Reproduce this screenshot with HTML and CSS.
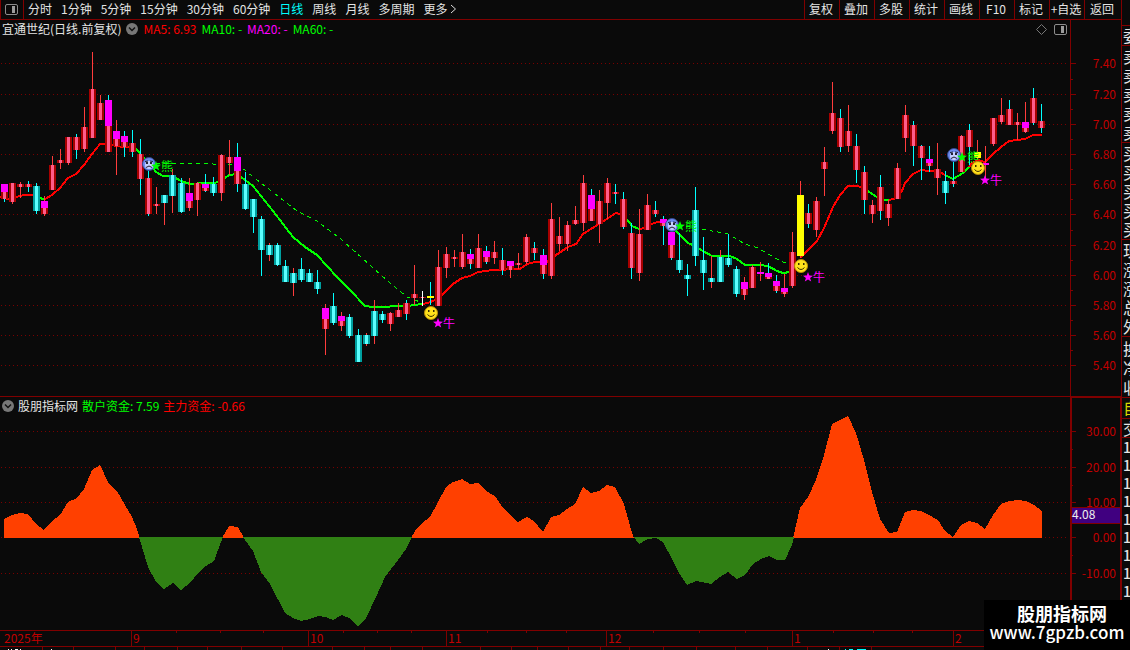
FILE: index.html
```html
<!DOCTYPE html>
<html lang="zh-CN">
<head>
<meta charset="utf-8">
<title>宜通世纪 日线</title>
<link rel="stylesheet" href="styles.css">
</head>
<body>
<svg class="defs" aria-hidden="true">
  <symbol id="smile" viewBox="0 0 14 14"><circle cx="7" cy="7" r="6.5" fill="#ffe11c" stroke="#b98c06"/><rect x="4" y="4" width="1.5" height="2" fill="#3a2c00"/><rect x="9" y="4" width="1.5" height="2" fill="#3a2c00"/><path d="M3.5 8.5Q7 12.5 10.5 8.5" fill="none" stroke="#3a2c00"/></symbol>
  <symbol id="sad" viewBox="0 0 14 14"><circle cx="7" cy="7" r="6.5" fill="#6d8cf0" stroke="#35478f"/><circle cx="7" cy="8" r="4" fill="#c5d0ff"/><path d="M3 4.5L6 4M8 4L11 4.500" stroke="#223" fill="none"/><rect x="4" y="5" width="2" height="2" fill="#223"/><rect x="8" y="5" width="2" height="2" fill="#223"/><path d="M4 10.500Q7 7.500 10 10.500" fill="none" stroke="#223"/></symbol>
  <symbol id="star" viewBox="0 0 10 10"><path d="M5 0L6.300 3.500L10 3.700L7.100 6L8.200 9.600L5 7.500L1.800 9.600L2.900 6L0 3.700L3.700 3.500Z" fill="currentColor"/></symbol>
  <symbol id="fold" viewBox="0 0 12 12"><circle cx="6" cy="6" r="6" fill="#777"/><path d="M3 4.500L6 7.500L9 4.500" fill="none" stroke="#111" stroke-width="1.500"/></symbol>
  <symbol id="pane" viewBox="0 0 13 11"><rect x=".5" y=".5" width="12" height="10" rx="1.500" fill="none" stroke="#8c8c8c"/><rect x="7" y="2" width="3" height="7" fill="#9c9c9c"/></symbol>
</svg>
<div class="app">
  <main class="main">
    <nav class="toolbar">
      <button class="pane-btn" aria-label="侧栏"><svg class="pane"><use href="#pane"/></svg></button>
      <div class="periods">
        <button>分时</button><button>1分钟</button><button>5分钟</button><button>15分钟</button><button>30分钟</button><button>60分钟</button><button class="active">日线</button><button>周线</button><button>月线</button><button>多周期</button><button class="more">更多<svg viewBox="0 0 7 10"><path d="M1 1L5.500 5L1 9" fill="none" stroke="#ddd"/></svg></button>
      </div>
      <div class="tools">
        <button>复权</button><button>叠加</button><button>多股</button><button>统计</button><button>画线</button><button>F10</button><button>标记</button><button>+自选</button><button>返回</button>
      </div>
    </nav>
    <section class="panel price">
      <div class="plot">
        <header class="legend">
          <span>宜通世纪(日线.前复权)</span>
          <button aria-label="展开"><svg class="fold"><use href="#fold"/></svg></button>
          <span class="red">MA5: 6.93</span><span class="green">MA10: -</span><span class="magenta">MA20: -</span><span class="green">MA60: -</span>
          <span class="corner"><svg class="diamond" viewBox="0 0 11 11"><path d="M5.500 .5L10.500 5.500L5.500 10.500L.5 5.500Z" fill="none" stroke="#777"/></svg><svg class="pane"><use href="#pane"/></svg></span>
        </header>
        <svg id="candles" class="chart" viewBox="0 38 1070 358" preserveAspectRatio="none"></svg>
      </div>
      <svg id="priceAxis" class="axis" viewBox="1070 20 51 376" preserveAspectRatio="none"></svg>
    </section>
    <section class="panel fund">
      <div class="plot">
        <header class="legend">
          <button aria-label="展开"><svg class="fold"><use href="#fold"/></svg></button>
          <span>股朋指标网</span><span class="green">散户资金: 7.59</span><span class="red">主力资金: -0.66</span>
        </header>
        <svg id="flow" class="chart" viewBox="0 414 1070 216" preserveAspectRatio="none"></svg>
      </div>
      <svg id="flowAxis" class="axis" viewBox="1070 397 51 233" preserveAspectRatio="none"></svg>
    </section>
    <div class="timeline">
      <span>2025年</span><span>9</span><span>10</span><span>11</span><span>12</span><span>1</span><span>2</span>
    </div>
    <svg id="strip" class="strip" viewBox="0 647 1121 3" preserveAspectRatio="none"></svg>
  </main>
  <aside class="quotes">
    <div class="blank"></div>
    <div class="g1">委</div>
    <div class="g5"><span>卖</span><span>卖</span><span>卖</span><span>卖</span><span>卖</span></div>
    <div class="g5"><span>买</span><span>买</span><span>买</span><span>买</span><span>买</span></div>
    <div class="g5"><span>现</span><span>涨</span><span>涨</span><span>总</span><span>外</span></div>
    <div class="g3"><span>换</span><span>净</span><span>收</span></div>
    <div class="g1 own">自</div>
    <div class="g1 deal">交</div>
    <div class="ticks"><span>1</span><span>1</span><span>1</span><span>1</span><span>1</span><span>1</span><span>1</span><span>1</span><span>1</span></div>
  </aside>
</div>
<div class="brand"><strong>股朋指标网</strong><span>www.7gpzb.com</span></div>
<script src="chart.js"></script>
</body>
</html>
```
FILE: styles.css
```css
* { box-sizing: border-box; }
body {
  margin: 0;
  background: #0a0a0a;
  color: #e4e4e4;
  font: 12px/18px "Noto Sans CJK SC", sans-serif;
  overflow: hidden;
}
button {
  padding: 0;
  border: 0;
  background: none;
  color: inherit;
  font: inherit;
  white-space: nowrap;
}
svg { display: block; }
.defs { position: absolute; width: 0; height: 0; }
.app { display: grid; grid-template-columns: minmax(0, 1fr) 9px; height: 100vh; }
.main { display: flex; flex-direction: column; min-width: 0; }
.toolbar {
  display: flex;
  height: 20px;
  flex: none;
  border-bottom: 1px solid #800000;
}
.toolbar button { padding-bottom: 2px; }
.toolbar .pane-btn {
  display: grid;
  place-items: center;
  width: 24px;
  padding: 0 2px 1px 0;
  border-left: 1px solid #800000;
  border-right: 1px solid #800000;
}
.pane { width: 13px; height: 11px; }
.periods { display: flex; gap: 9px; padding-left: 4px; }
.periods .active { color: #00ffff; }
.more { display: flex; align-items: center; gap: 3px; }
.more svg { width: 7px; height: 10px; }
.tools { display: flex; margin-left: auto; }
.tools button { width: 35px; padding-right: 2px; border-left: 1px solid #800000; }
.tools button:last-child { width: 37px; }
.panel { display: grid; grid-template-columns: minmax(0, 1fr) 51px; min-height: 0; }
.price { flex: 376 1 0; }
.fund { flex: 233 1 0; border-top: 1px solid #800000; }
.plot { display: flex; flex-direction: column; min-height: 0; min-width: 0; }
.legend { display: flex; align-items: center; gap: 5px; height: 18px; padding: 0 3px 0 2px; flex: none; }
.fund .legend { height: 17px; gap: 4px; }
.fold { width: 12px; height: 12px; }
.corner { display: flex; align-items: center; gap: 7px; margin-left: auto; }
.diamond { width: 11px; height: 11px; }
.red { color: #ff0000; }
.green { color: #00ff00; }
.magenta { color: #ff00ff; }
.chart { width: 100%; flex: 1; min-height: 0; }
.axis { width: 51px; height: 100%; min-height: 0; }
.chart text, .axis text { font: 12px "Noto Sans CJK SC", sans-serif; }
.axis text { fill: #c00000; text-anchor: end; }
.axis .current { fill: #eeeeee; text-anchor: start; }
.timeline {
  display: grid;
  grid-template-columns: 131fr 177fr 138fr 160fr 186fr 161fr 168fr;
  height: 17px;
  flex: none;
  border-top: 1px solid #800000;
  border-bottom: 1px solid #800000;
  color: #c00000;
  line-height: 14px;
}
.timeline span {
  padding-left: 1px;
  border-left: 1px solid #800000;
  background:
    linear-gradient(#800000, #800000) 25% 0 / 1px 2px no-repeat,
    linear-gradient(#800000, #800000) 50% 0 / 1px 2px no-repeat,
    linear-gradient(#800000, #800000) 75% 0 / 1px 2px no-repeat;
}
.timeline span:first-child { padding-left: 4px; border: 0; background: none; }
.strip { width: 100%; height: 3px; flex: none; }
.quotes {
  border-left: 1px solid #800000;
  overflow: hidden;
  font-size: 16px;
}
.quotes div { display: flex; flex-direction: column; border-bottom: 1px solid #800000; padding-left: 1px; }
.quotes .blank { height: 26px; }
.quotes .g1 { height: 20px; line-height: 19px; }
.quotes .g5 { height: 97px; justify-content: space-evenly; }
.quotes .g3 { height: 61px; justify-content: space-evenly; }
.quotes .own { height: 21px; color: #d8d800; }
.quotes .deal { height: 19px; line-height: 18px; }
.quotes .ticks { border: 0; font-size: 14px; font-weight: 500; }
.brand {
  position: absolute;
  right: 0;
  bottom: 0;
  display: flex;
  flex-direction: column;
  align-items: center;
  width: 146px;
  height: 50px;
  padding: 3px 0 0 10px;
  background: #000000;
  color: #ffffff;
}
.brand strong { font-size: 18px; line-height: 20px; }
.brand span { margin-left: -10px; font: 500 17px/18px "Noto Sans CJK SC", sans-serif; }
```
FILE: chart.js
```js
const NS = 'http://www.w3.org/2000/svg';
const el = (parent, tag, attrs, text) => {
  const node = document.createElementNS(NS, tag);
  for (const k in attrs) node.setAttribute(k, attrs[k]);
  if (text !== undefined) node.textContent = text;
  parent.appendChild(node);
  return node;
};
const crisp = 'crispEdges';
const byId = id => document.getElementById(id);

// body colour + wick colour, high, top, bottom, low, optional marker range
const candles = `rc 184 184 199 202 184 192|rr 183 183 202 204|rr 182 184 187 198|rc 181 184 187 192|cc 183 186 211 214|rr 196 201 214 216 201 208|rr 156 165 190 190|rr 149 160 163 169|rr 137 137 163 165|rc 134 137 150 159
rr 107 127 149 152|rr 52 89 138 138|rr 95 103 120 120|rc 95 100 152 152 100 126|rr 120 131 146 175 131 139|rc 131 136 147 157 136 142|rc 130 143 152 157|rc 139 154 179 195|rc 168 178 214 216|rr 187 204 206 214
cr 195 195 203 225|cr 169 175 196 213|cc 178 183 212 213|rr 178 193 208 211 193 201|rr 182 183 200 216|rc 174 184 191 192 184 188|cc 177 184 193 196|rr 154 155 193 201|rr 140 157 163 175|rc 143 157 184 192 157 171
cc 172 184 209 210|cc 199 199 217 233|cc 216 219 250 276|cr 243 245 255 261|cc 243 245 265 266|cc 260 266 282 282|cr 268 273 283 296|cc 258 269 280 282|cc 269 273 282 282|cc 270 282 289 294
rr 304 308 329 355 308 319|cc 293 306 323 325|rr 312 316 326 331 316 321|cc 314 317 336 338|cc 329 335 362 362|cr 333 335 344 346|cr 300 311 336 344|cc 311 314 320 323|rr 312 313 324 331|rr 303 310 317 317
rc 300 303 314 320|rr 265 294 298 305|rw 291 297 298 306|yc 282 296 298 305|rr 250 267 306 306|rr 247 254 268 278|rr 250 257 259 267|rr 234 252 267 269|rc 249 254 264 269 254 259|rr 234 248 268 268
rc 246 251 262 264 251 257|rr 241 252 258 264|rc 248 260 270 275|rr 261 261 270 278 261 266|rr 253 263 265 269|rr 234 237 262 264|rc 242 248 253 260|rc 249 255 274 279 255 265|rr 203 219 276 279|rr 217 236 244 251
rr 221 225 244 251|rr 206 220 224 225|rr 175 183 223 231|rc 189 195 221 221 195 209|rr 190 201 224 243|rr 178 183 203 219|rc 184 192 194 204|rc 192 199 227 229|rc 223 233 268 279|rr 209 234 273 281
rr 194 205 230 230|rc 201 210 214 217|rc 216 219 226 245 219 223|rc 232 232 258 260 232 245|cc 233 260 270 273|cc 264 275 279 296|cc 187 210 256 266|cc 237 260 273 290|cr 256 278 282 288|cr 250 257 282 282
cc 234 258 265 267|cc 266 269 294 297|rr 277 282 295 300 282 289|rr 265 267 288 288|rr 262 272 274 281 272 274|rc 263 273 279 279 273 277|rc 275 281 291 293 281 286|rr 274 288 294 297 288 292|rr 232 252 286 288|yr 181 195 256 258
rc 204 213 224 228|rr 197 201 230 237|rr 147 162 169 196|rr 82 113 131 134|rc 109 118 147 152|rr 105 131 146 152|rc 134 146 170 183|rc 166 172 200 214|rr 200 205 214 223|rc 175 187 211 220
rr 200 204 218 226|rr 163 168 199 199|rr 105 115 138 152|rc 121 125 146 166|rc 145 146 158 180|rc 146 159 166 172 159 163|rr 143 169 178 195|cc 171 181 193 204|rc 160 181 184 187|rr 135 136 172 172
rc 124 130 147 165|yr 140 152 158 160|rr 146 163 165 180 163 165|rr 118 118 144 146|rr 98 115 122 124|rc 100 109 125 125|rr 113 122 125 140|rr 102 122 132 133 122 128|rc 88 98 123 125|rc 104 121 128 133`
  .split(/[|\n]/).map(s => s.trim().split(' '));

const average = [
  ['#f00', '0,197 8,199 16,197 24,195 32,195 39,197'],
  ['#0f0', '39,197 42,199 45,199'],
  ['#f00', '45,199 52,195 60,188 68,178 76,174 84,165 92,154 100,144 108,144 116,146 124,147 134,147'],
  ['#0f0', '134,147 138,151 143,157 148,161 156,172 163,176 172,176 181,181 190,184 205,183 215,183 222,180 229,175 237,174 245,180 253,186 273,211 293,237 305,247 317,255 337,277 350,290 365,306 373,307 407,306 422,304'],
  ['#f00', '422,304 428,303 435,300 442,295 453,284 462,278 470,276 478,272 493,270 520,269 527,264 535,262 547,262 553,257 568,247 576,244 583,234 599,224 616,213 623,215'],
  ['#0f0', '625,217 632,226 639,229'],
  ['#f00', '639,229 645,228 652,224 657,222 671,222'],
  ['#0f0', '671,227 679,234 688,243 695,246 703,251 712,256 730,256 737,259 745,265 760,265 768,266 777,271 783,273 790,272'],
  ['#f00', '800,258 817,241 824,228 833,207 840,195 848,186 857,186 864,188'],
  ['#0f0', '866,190 877,197 883,200 889,200'],
  ['#f00', '889,200 897,198 902,191 905,183 913,174 921,170 929,171 940,172 945,175'],
  ['#0f0', '945,175 953,179 963,173 969,167'],
  ['#f00', '969,167 972,163 978,160 985,162 993,154 1001,147 1009,141 1025,139 1033,135 1042,135'],
];
const dashed = [
  '156,163 177,164 200,163 213,164 233,165 245,170 252,176 270,190 297,211 317,221 342,240 372,267 390,283 407,297 420,302',
  '678,225 702,229 728,234 745,244 758,248 775,258 783,262 790,263',
];

const c = byId('candles');
const prices = [[63, '7.40'], [94, '7.20'], [124, '7.00'], [154, '6.80'], [184, '6.60'], [214, '6.40'], [245, '6.20'], [275, '6.00'], [305, '5.80'], [335, '5.60'], [365, '5.40']];
const levels = [[431, '30.00'], [467, '20.00'], [502, '10.00'], [537, '0.00'], [573, '-10.00']];
const grid = (svg, rows) => rows.forEach(([y]) =>
  el(svg, 'path', { d: `M1 ${y + .5}H1068`, stroke: '#7a0000', 'stroke-dasharray': '1 3', 'shape-rendering': crisp }));
grid(c, prices);
average.forEach(([stroke, points]) => el(c, 'polyline', { points, stroke, fill: 'none', 'stroke-width': 2, 'shape-rendering': crisp }));
dashed.forEach(points => el(c, 'polyline', { points, stroke: '#0f0', fill: 'none', 'stroke-dasharray': '4 4', 'shape-rendering': crisp }));

const edge = { r: '#a80000', c: '#00a0a0', y: '#ffff00' };
const core = { r: '#ff5c8a', c: '#5cffff', y: '#ffff00' };
const wick = { r: '#ff3c3c', c: '#00ffff', w: '#ffffff' };
const box = (x, y, width, height, fill) => el(c, 'rect', { x, y, width, height, fill, 'shape-rendering': crisp });
candles.forEach(([kind, ...v], i) => {
  const x = Math.floor(i * 8.045 + .02) + 4;
  const [high, top, bottom, low, m1, m2] = v.map(Number);
  box(x, high, 1, low - high, wick[kind[1]]);
  box(x - 3, top, 7, bottom - top, edge[kind[0]]);
  box(x - 1, top, 3, bottom - top, core[kind[0]]);
  if (kind[1] === 'w') box(x, high, 1, low - high, wick.w);
  if (m1) box(x - 3, m1, 7, m2 - m1, '#ff00ff');
});
const signal = (icon, x, y, sx, sy, word, color) => {
  el(c, 'use', { href: '#' + icon, x: x - 7, y: y - 7, width: 14, height: 14 });
  el(c, 'use', { href: '#star', x: sx - 5, y: sy - 5, width: 10, height: 10, color });
  el(c, 'text', { x: sx + 5, y: sy + 5, fill: color }, word);
};
signal('sad', 149, 164, 156, 166, '熊', '#00ff00');
signal('sad', 672, 225, 680, 226, '熊', '#00ff00');
signal('sad', 954, 155, 962, 157, '熊', '#00ff00');
signal('smile', 431, 313, 438, 323, '牛', '#ff00ff');
signal('smile', 801, 266, 808, 277, '牛', '#ff00ff');
signal('smile', 978, 168, 985, 180, '牛', '#ff00ff');

const f = byId('flow');
grid(f, levels);
const area = (points, fill) => el(f, 'polygon', { points, fill, 'shape-rendering': crisp });
[
  '4,538 4,519 12,515 20,513 28,514 36,524 44,530 52,521 60,515 68,502 77,498 84,489 92,470 100,465 109,484 117,491 125,505 132,517 137,529 140,538',
  '222,538 229,526 238,527 244,538',
  '411,538 415,531 422,523 430,517 438,502 446,487 453,482 462,479 470,484 478,483 486,491 495,496 503,508 511,516 518,522 527,517 534,521 543,532 551,517 559,515 567,509 575,504 583,487 591,493 599,491 607,485 615,487 624,504 632,533 634,538',
  '793,538 800,508 808,497 816,480 824,455 832,424 840,420 848,416 856,433 864,460 872,492 880,519 889,533 897,532 905,512 913,510 921,511 929,515 938,520 945,531 953,537 961,525 969,521 977,523 985,529 993,515 1001,504 1009,501 1018,500 1026,501 1034,505 1042,511 1042,538',
].forEach(p => area(p, '#ff4000'));
[
  '139,537 148,567 156,582 164,589 173,583 181,590 190,583 198,573 206,566 214,561 218,550 223,537',
  '243,537 253,551 261,572 270,584 285,613 293,618 301,621 310,619 318,616 326,617 333,620 342,615 349,618 358,627 366,618 376,597 385,577 398,560 406,549 412,537',
  '634,537 639,544 648,539 656,538 663,542 672,559 679,573 687,585 696,581 711,584 720,577 728,572 737,579 745,575 753,564 761,559 769,556 777,560 785,560 792,545 794,537',
].forEach(p => area(p, '#308014'));

const axis = (svg, rows, top, bottom, width) => {
  const line = d => el(svg, 'path', { d, stroke: '#800000', 'shape-rendering': crisp });
  el(svg, 'rect', { x: 1070, y: top, width, height: bottom - top, fill: '#800000', 'shape-rendering': crisp });
  rows.forEach(([y, label], i) => {
    line(`M1071 ${y + .5}H1076`);
    if (rows[i + 1]) line(`M1071 ${Math.round((y + rows[i + 1][0]) / 2) + .5}H1073`);
    el(svg, 'text', { x: 1116, y: y + 5 }, label);
  });
};
axis(byId('priceAxis'), prices, 20, 396, 1);
const fa = byId('flowAxis');
axis(fa, levels, 397, 630, 2);
el(fa, 'path', { d: 'M1070 397.5H1121M1120.5 397V630', stroke: '#800000', fill: 'none', 'shape-rendering': crisp });
el(fa, 'rect', { x: 1072, y: 507, width: 48, height: 17, fill: '#400080' });
el(fa, 'path', { d: 'M1072 507.5H1120M1072 523.5H1120', stroke: '#800000', 'shape-rendering': crisp });
el(fa, 'text', { x: 1072, y: 519, class: 'current' }, '4.08');

const s = byId('strip');
[42, 73, 115, 144, 177, 207, 241, 282, 332, 364, 390, 422, 480, 511, 537, 568, 600, 629, 663, 696, 735, 767, 807, 839, 871].forEach(x =>
  el(s, 'rect', { x, y: 647, width: 1, height: 3, fill: '#800000' }));
[[8, 1, '#fff'], [11, 1, '#fff'], [15, 3, '#fff'], [20, 1, '#fff'], [51, 1, '#fff'], [828, 1, '#fff'], [845, 1, '#0ff'], [849, 4, '#0ff'], [857, 9, '#0ff']].forEach(([x, width, fill]) =>
  el(s, 'rect', { x, y: 649, width, height: 1, fill }));
```
